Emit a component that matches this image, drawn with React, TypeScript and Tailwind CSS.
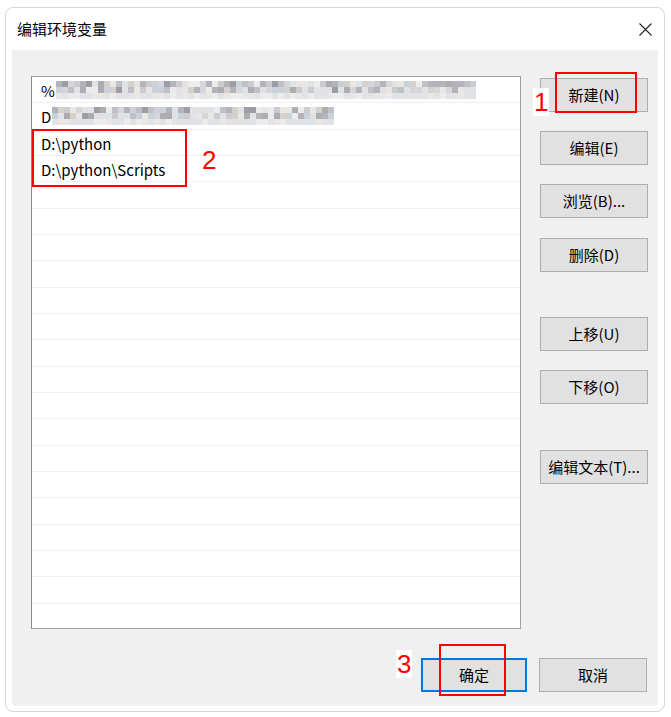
import React from "react";

const font = "font-['Microsoft_YaHei_UI','Noto_Sans_CJK_SC',sans-serif]";

// deterministic pseudo-random tones for the pixelated (blurred) entries
const mosaic = (seed: number, cols: number) => {
  let s = seed;
  const rnd = () => {
    s = (s * 9301 + 49297) % 233280;
    return s / 233280;
  };
  const tones = [
    "#e2e2e5", "#d6d6da", "#cbccd0", "#c0c1c6", "#e9e6e4", "#b3b4bb",
    "#9e9da6", "#d6d0ca", "#c9d1da", "#dfe3e8", "#aeabb1", "#ececec",
  ];
  const rows: string[][] = [];
  for (let r = 0; r < 3; r++) {
    const row: string[] = [];
    for (let c = 0; c < cols; c++) {
      const v = rnd();
      const t = r === 2 ? tones[[0, 4, 9, 11][Math.floor(v * 4)]] : tones[Math.floor(v * tones.length)];
      row.push(t);
    }
    rows.push(row);
  }
  return rows;
};

const Blur = ({ seed, cols }: { seed: number; cols: number }) => {
  const rows = mosaic(seed, cols);
  return (
    <div className="flex flex-col">
      {rows.map((row, i) => (
        <div key={i} className="flex">
          {row.map((c, j) => (
            <div key={j} className="w-[6px] h-[6px]" style={{ backgroundColor: c }} />
          ))}
        </div>
      ))}
    </div>
  );
};

const Btn = ({ label, className = "" }: { label: string; className?: string }) => (
  <div
    className={`w-[108px] h-[34px] bg-[#e1e1e1] border border-[#adadad] flex items-center justify-center text-[15px] text-black ${className}`}
  >
    {label}
  </div>
);

const Mark = ({ n, className }: { n: string; className: string }) => (
  <div
    className={`absolute font-['Liberation_Sans',sans-serif] text-[26px] leading-none text-[#ff0000] ${className}`}
  >
    {n}
  </div>
);

export default function App() {
  const rows = Array.from({ length: 21 });

  return (
    <div className={`w-[671px] h-[717px] bg-white pt-[7px] pl-[5px] ${font}`}>
      <div className="w-[660px] h-[705px] border border-[#d6d6d6] rounded-[8px] bg-white flex flex-col">
        {/* TITLE */}
        <div className="h-[42px] flex items-center justify-between pl-[11px] pr-[11px]">
          <span className="text-[15px] text-black">编辑环境变量</span>
          <svg width="13" height="13" viewBox="0 0 13 13" className="mr-[1px]">
            <path d="M0.5 0.5L12.5 12.5M12.5 0.5L0.5 12.5" stroke="#222" strokeWidth="1.1" />
          </svg>
        </div>

        {/* BODY */}
        <div className="ml-[6px] w-[646px] h-[656px] bg-[#f0f0f0] rounded-b-[4px] pl-[19px] pt-[26px] flex flex-col">
          <div className="flex gap-[19px]">
            {/* LIST */}
            <div className="relative w-[490px] h-[553px] bg-white border border-[#a0a0a0] border-l-[#8a8a8a] overflow-hidden">
              {rows.map((_, i) => (
                <div
                  key={i}
                  className="h-[26.33px] border-b border-[#f0f0f0] flex items-center pl-[9px] pt-[3px] text-[15px] text-black"
                >
                  {i === 0 && (
                    <>
                      <span>%</span>
                      <div className="ml-[1px] -mt-[2px]">
                        <Blur seed={7} cols={70} />
                      </div>
                    </>
                  )}
                  {i === 1 && (
                    <>
                      <span>D</span>
                      <div className="ml-[1px] -mt-[2px]">
                        <Blur seed={31} cols={47} />
                      </div>
                    </>
                  )}
                  {i === 2 && <span>D:\python</span>}
                  {i === 3 && <span>D:\python\Scripts</span>}
                </div>
              ))}
              <div className="absolute left-[0px] top-[52px] w-[155px] h-[58px] border-2 border-[#ff0000]" />
              <Mark n="2" className="left-[170px] top-[70px]" />
            </div>

            {/* SIDE BUTTONS */}
            <div className="flex flex-col pt-[2px]">
              <div className="relative">
                <Btn label="新建(N)" />
                <div className="absolute left-[15px] top-[-6px] w-[82px] h-[41px] border-2 border-[#ff0000]" />
                <Mark n="1" className="left-[-7px] top-[10px] bg-white px-[1px] py-[1px]" />
              </div>
              <Btn label="编辑(E)" className="mt-[19px]" />
              <Btn label="浏览(B)..." className="mt-[19px]" />
              <Btn label="删除(D)" className="mt-[20px]" />
              <Btn label="上移(U)" className="mt-[45px]" />
              <Btn label="下移(O)" className="mt-[19px]" />
              <Btn label="编辑文本(T)..." className="mt-[46px]" />
            </div>
          </div>

          {/* FOOTER */}
          <div className="mt-[29px] flex pl-[390px] gap-[12px]">
            <div className="relative">
              <div className="w-[106px] h-[34px] bg-[#e1e1e1] border-2 border-[#0078d7] flex items-center justify-center text-[15px] text-black">
                确定
              </div>
              <div className="absolute left-[18px] top-[-14px] w-[67px] h-[52px] border-2 border-[#ff0000]" />
              <Mark n="3" className="left-[-25px] top-[-8px] bg-white px-[1px] py-[1px]" />
            </div>
            <Btn label="取消" />
          </div>
        </div>
      </div>
    </div>
  );
}
